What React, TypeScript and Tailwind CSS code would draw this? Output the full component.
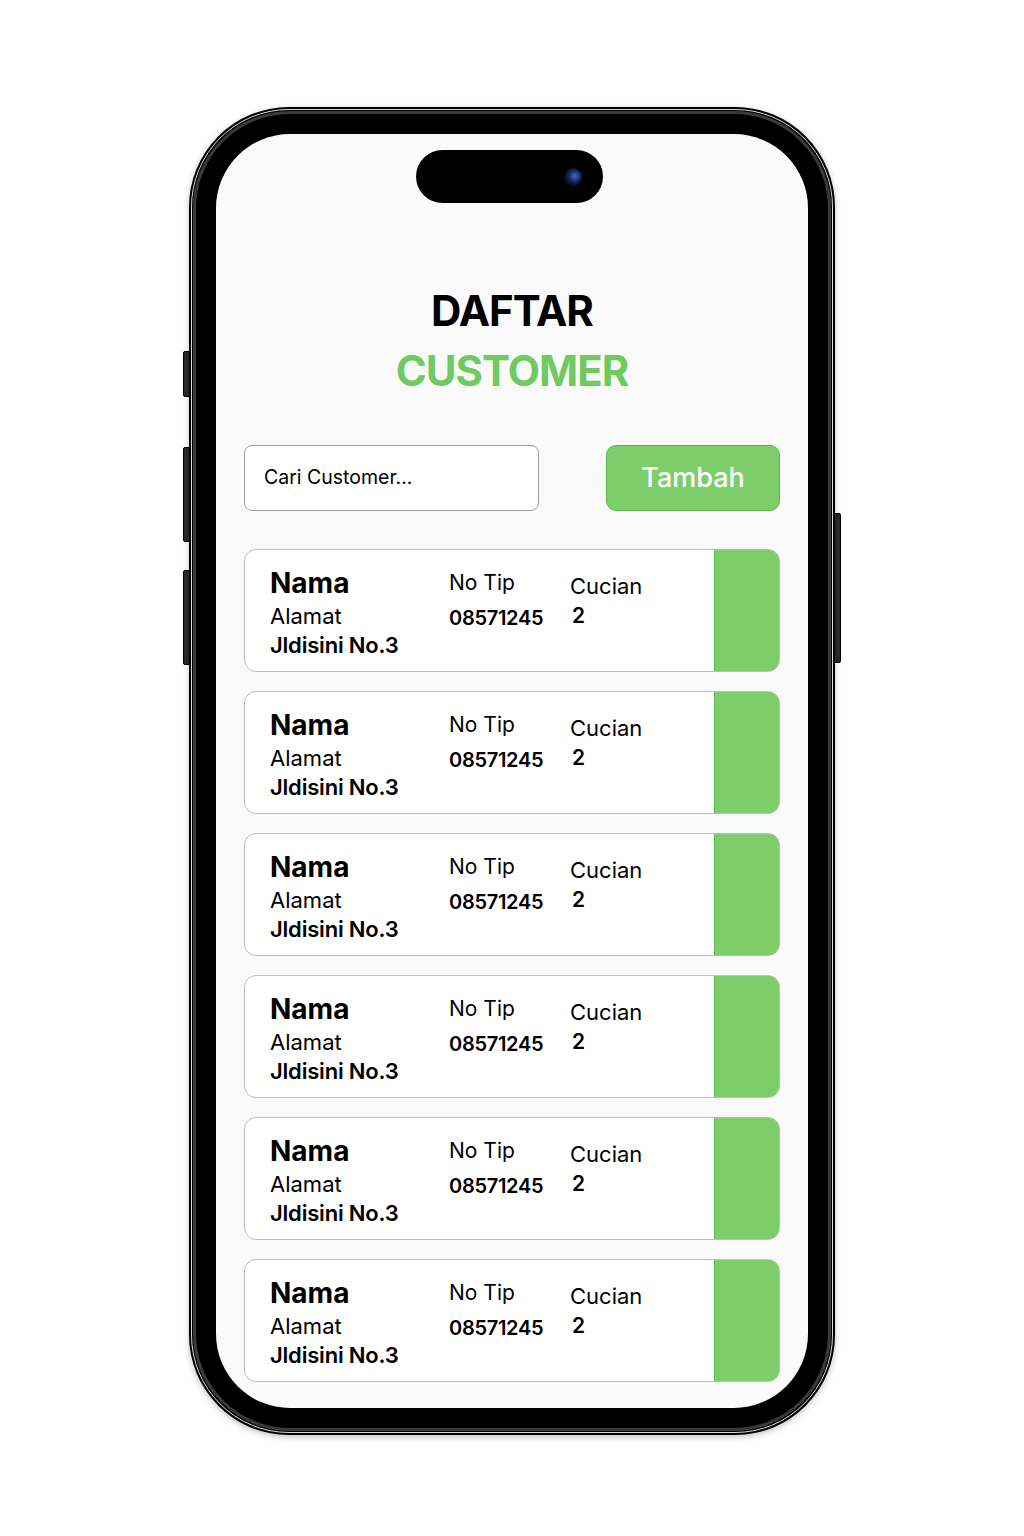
const FONT = { fontFamily: 'Inter, "Noto Sans", sans-serif' }

type Customer = { nama: string; alamat: string; noTip: string; cucian: number }

const customers: Customer[] = Array.from({ length: 6 }, () => ({
  nama: 'Nama',
  alamat: 'Jldisini No.3',
  noTip: '08571245',
  cucian: 2,
}))

function CustomerCard({ c }: { c: Customer }) {
  return (
    <li className="flex h-[123px] overflow-hidden rounded-[12px] border border-[#bdbdbd] bg-white">
      <div className="grid flex-1 grid-cols-[179px_121px_1fr] pl-[25px] text-black">
        <div className="pt-[18px]">
          <div className="text-[28px] font-bold leading-[31px]">{c.nama}</div>
          <div className="mt-[2px] text-[22px] leading-[30px]">Alamat</div>
          <div className="text-[22px] font-semibold leading-[29px] tracking-[-0.2px]">{c.alamat}</div>
        </div>
        <div className="pt-[18px]">
          <div className="text-[21px] leading-[30px]">No Tip</div>
          <div className="mt-[5px] text-[20px] font-semibold leading-[30px] tracking-[-0.3px]">{c.noTip}</div>
        </div>
        <div className="pt-[21px]">
          <div className="text-[22px] leading-[30px]">Cucian</div>
          <div className="pl-[2px] text-[21px] font-semibold leading-[30px]">{c.cucian}</div>
        </div>
      </div>
      <div className="-my-px -mr-px w-[66px] rounded-r-[12px] border border-[#5fb94d] bg-[#7ecd6b]" />
    </li>
  )
}

function Screen() {
  return (
    <div className="relative h-full overflow-hidden rounded-[74px] bg-[#fafafa]" style={FONT}>
      {/* dynamic island */}
      <div className="mx-auto mt-[16px] flex h-[53px] w-[187px] -translate-x-[3px] items-center justify-end rounded-full bg-black pr-[21px]">
        <div className="h-[18px] w-[18px] rounded-full bg-[radial-gradient(circle_at_60%_45%,#3b6bd6_0,#12204a_45%,#05070f_75%)]" />
      </div>

      <h1 className="mt-[78px] text-center text-[42px] font-bold leading-[60px] tracking-[-1px]">
        <span className="block text-black">DAFTAR</span>
        <span className="block text-[#6fca60]">CUSTOMER</span>
      </h1>

      <div className="mt-[44px] px-[28px]">
        <div className="flex items-center justify-between">
          <div className="flex h-[66px] w-[295px] items-center rounded-[8px] border border-[#9e9e9e] bg-white pl-[19px] text-[19.5px] text-black">
            Cari Customer...
          </div>
          <button className="h-[66px] w-[174px] rounded-[10px] border border-[#5cb84a] bg-[#7ecd6b] text-[27px] font-medium text-white">
            Tambah
          </button>
        </div>

        <ul className="mt-[38px] flex flex-col gap-[19px]">
          {customers.map((c, i) => (
            <CustomerCard key={i} c={c} />
          ))}
        </ul>
      </div>
    </div>
  )
}

export default function App() {
  return (
    <div className="flex min-h-[1536px] justify-center bg-white pt-[107px]">
      <div className="relative h-[1328px] w-[646px]">
        {/* side buttons */}
        <div className="absolute left-[-6px] top-[244px] h-[46px] w-[7px] rounded-l-[2px] border border-black bg-[#2a2a2a]" />
        <div className="absolute left-[-6px] top-[340px] h-[95px] w-[7px] rounded-l-[2px] border border-black bg-[#2a2a2a]" />
        <div className="absolute left-[-6px] top-[463px] h-[95px] w-[7px] rounded-l-[2px] border border-black bg-[#2a2a2a]" />
        <div className="absolute right-[-6px] top-[406px] h-[150px] w-[7px] rounded-r-[2px] border border-black bg-[#2a2a2a]" />

        <div className="relative h-full rounded-[100px] bg-black p-[2px] shadow-[0_2px_6px_rgba(0,0,0,0.25)]">
          <div className="h-full rounded-[98px] border-[1px] border-[#d9d9d9] bg-black p-px">
            <div className="h-full rounded-[97px] border-[3px] border-[#3a3a3a] bg-black p-[20px]">
              <Screen />
            </div>
          </div>
        </div>
      </div>
    </div>
  )
}
